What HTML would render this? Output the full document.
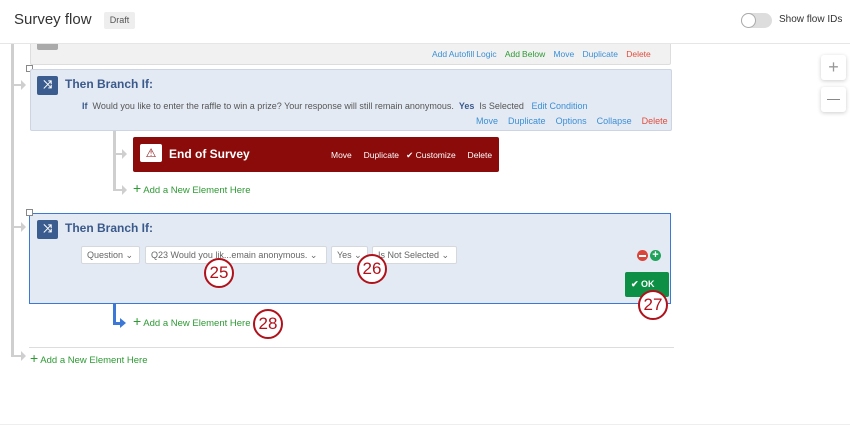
<!DOCTYPE html>
<html><head><style>
*{box-sizing:border-box;margin:0;padding:0}
body{width:850px;height:425px;overflow:hidden;background:#fff;font-family:"Liberation Sans",sans-serif;position:relative;font-size:9px;color:#555}
.a{position:absolute;white-space:nowrap}
.lk{color:#3a8fd6}
.del{color:#e04d3c}
.gr{color:#2e9a34}
.circ{position:absolute;width:30px;height:30px;border:2.5px solid #b0121b;border-radius:50%;background:#fff;color:#b0121b;font-size:17px;text-align:center;line-height:25px}
.dd{position:absolute;top:246px;height:18px;background:#fff;border:1px solid #d5d8dd;border-radius:2px;font-size:9px;color:#666;line-height:16px;padding-left:5px}
.vl{position:absolute;background:#cfcfcf}
.arr{position:absolute;width:0;height:0;border-top:5px solid transparent;border-bottom:5px solid transparent;border-left:5px solid #cfcfcf}
.ic{position:absolute;width:21px;height:19px;background:#3b5c8f;border-radius:2px;color:#fff;font-size:11px;text-align:center;line-height:19px;font-weight:bold}
</style></head><body>
<div class="a" style="left:0;top:0;width:850px;height:44px;border-bottom:1px solid #e6e6e6;background:#fff;z-index:2"></div>
<div class="a" style="left:14px;top:11px;font-size:15px;color:#333;z-index:3">Survey flow</div>
<div class="a" style="left:104px;top:12px;width:31px;height:17px;background:#eee;border-radius:2px;font-size:9px;color:#555;text-align:center;line-height:17px;z-index:3">Draft</div>
<div class="a" style="left:741px;top:13px;width:31px;height:15px;background:#ddd;border-radius:8px;z-index:3"></div>
<div class="a" style="left:741px;top:13px;width:15px;height:15px;background:#fff;border:1px solid #aaa;border-radius:50%;z-index:3"></div>
<div class="a" style="left:779px;top:14px;font-size:10px;line-height:12px;color:#333;z-index:3">Show flow IDs</div>

<div class="vl" style="left:11px;top:44px;width:3px;height:312px"></div>
<div class="vl" style="left:11px;top:84px;width:12px;height:2px"></div><div class="arr" style="left:21px;top:80px"></div>
<div class="vl" style="left:11px;top:226px;width:12px;height:2px"></div><div class="arr" style="left:21px;top:222px"></div>
<div class="vl" style="left:11px;top:355px;width:12px;height:2px"></div><div class="arr" style="left:21px;top:351px"></div>

<div class="a" style="left:30px;top:30px;width:641px;height:35px;background:#f1f1f1;border:1px solid #ddd;border-radius:2px"></div>
<div class="a" style="left:37px;top:38px;width:21px;height:12px;background:#aaa;border-radius:2px"></div>
<div class="a" style="left:432px;top:49px;font-size:8.5px;word-spacing:-0.3px"><span class="lk">Add Autofill Logic</span>&nbsp;&nbsp;&nbsp;&nbsp;<span class="gr">Add Below</span>&nbsp;&nbsp;&nbsp;&nbsp;<span class="lk">Move</span>&nbsp;&nbsp;&nbsp;&nbsp;<span class="lk">Duplicate</span>&nbsp;&nbsp;&nbsp;&nbsp;<span class="del">Delete</span></div>

<div class="a" style="left:26px;top:65px;width:7px;height:7px;border:1px solid #888;background:#fff"></div>
<div class="a" style="left:30px;top:69px;width:642px;height:62px;background:#e4eaf4;border:1px solid #cdd5e2;border-radius:2px"></div>
<div class="ic" style="left:37px;top:76px">⤨</div>
<div class="a" style="left:65px;top:77px;font-size:12px;font-weight:bold;color:#3b5a8c">Then Branch If:</div>
<div class="a" style="left:82px;top:101px;font-size:9px;color:#555"><b style="color:#3b5a8c">If</b>&nbsp; Would you like to enter the raffle to win a prize? Your response will still remain anonymous. &nbsp;<b style="color:#3b5a8c">Yes</b>&nbsp; Is Selected &nbsp;&nbsp;<span class="lk">Edit Condition</span></div>
<div class="a" style="left:476px;top:116px;font-size:9px"><span class="lk">Move</span>&nbsp;&nbsp;&nbsp;&nbsp;<span class="lk">Duplicate</span>&nbsp;&nbsp;&nbsp;&nbsp;<span class="lk">Options</span>&nbsp;&nbsp;&nbsp;&nbsp;<span class="lk">Collapse</span>&nbsp;&nbsp;&nbsp;&nbsp;<span class="del">Delete</span></div>

<div class="vl" style="left:113px;top:131px;width:3px;height:60px"></div>
<div class="vl" style="left:113px;top:153px;width:10px;height:2px"></div><div class="arr" style="left:122px;top:149px"></div>
<div class="vl" style="left:113px;top:189px;width:10px;height:2px"></div><div class="arr" style="left:122px;top:185px"></div>
<div class="a" style="left:133px;top:137px;width:366px;height:35px;background:#8b0a0a;border-radius:2px"></div>
<div class="a" style="left:140px;top:144px;width:22px;height:18px;background:#fff;border-radius:2px;color:#8b0a0a;text-align:center;font-size:12px;line-height:18px">⚠</div>
<div class="a" style="left:169px;top:147px;font-size:12px;font-weight:bold;color:#fff">End of Survey</div>
<div class="a" style="left:331px;top:150px;font-size:8.5px;color:#fff">Move&nbsp;&nbsp;&nbsp;&nbsp;&nbsp;Duplicate&nbsp;&nbsp;&nbsp;✔ Customize&nbsp;&nbsp;&nbsp;&nbsp;&nbsp;Delete</div>
<div class="a gr" style="left:133px;top:184px;font-size:9.5px"><span style="font-size:14px;line-height:9px">+</span> Add a New Element Here</div>

<div class="a" style="left:26px;top:209px;width:7px;height:7px;border:1px solid #888;background:#fff;z-index:2"></div>
<div class="a" style="left:29px;top:213px;width:642px;height:91px;background:#e4eaf4;border:1.5px solid #3c78d8"></div>
<div class="ic" style="left:37px;top:220px">⤨</div>
<div class="a" style="left:65px;top:221px;font-size:12px;font-weight:bold;color:#3b5a8c">Then Branch If:</div>
<div class="dd" style="left:81px;width:59px">Question ⌄</div>
<div class="dd" style="left:145px;width:182px">Q23 Would you lik...emain anonymous. ⌄</div>
<div class="dd" style="left:331px;width:37px">Yes ⌄</div>
<div class="dd" style="left:372px;width:85px">Is Not Selected ⌄</div>
<div class="a" style="left:637px;top:250px;width:11px;height:11px;border-radius:50%;background:#d9453a"><div style="margin:4.5px 2px;height:2px;background:#fff"></div></div>
<div class="a" style="left:650px;top:250px;width:11px;height:11px;border-radius:50%;background:#1fa25a;color:#fff;font-size:11px;font-weight:bold;text-align:center;line-height:11px">+</div>
<div class="a" style="left:625px;top:272px;width:44px;height:25px;background:#0d8f45;border-radius:2px;color:#fff;font-size:9px;font-weight:bold;line-height:25px;padding-left:6px">✔ OK</div>

<div class="a" style="left:113px;top:304px;width:3px;height:20px;background:#3c78d8"></div>
<div class="a" style="left:113px;top:322px;width:8px;height:3px;background:#3c78d8"></div>
<div class="a" style="left:120px;top:318px;border-top:5px solid transparent;border-bottom:5px solid transparent;border-left:6px solid #3c78d8"></div>
<div class="a gr" style="left:133px;top:317px;font-size:9.5px"><span style="font-size:14px;line-height:9px">+</span> Add a New Element Here</div>
<div class="a" style="left:29px;top:347px;width:645px;height:1px;background:#ddd"></div>
<div class="a gr" style="left:30px;top:354px;font-size:9.5px"><span style="font-size:14px;line-height:9px">+</span> Add a New Element Here</div>

<div class="a" style="left:821px;top:55px;width:25px;height:25px;background:#fff;box-shadow:0 1px 4px rgba(0,0,0,.2);border-radius:3px;color:#999;font-size:18px;text-align:center;line-height:24px">+</div>
<div class="a" style="left:821px;top:87px;width:25px;height:25px;background:#fff;box-shadow:0 1px 4px rgba(0,0,0,.2);border-radius:3px"><div style="margin:12px 6px;height:1px;background:#888"></div></div>
<div class="a" style="left:0;top:424px;width:850px;height:1px;background:#eee"></div>

<div class="circ" style="left:204px;top:258px">25</div>
<div class="circ" style="left:357px;top:254px">26</div>
<div class="circ" style="left:638px;top:290px">27</div>
<div class="circ" style="left:253px;top:309px">28</div>
</body></html>
